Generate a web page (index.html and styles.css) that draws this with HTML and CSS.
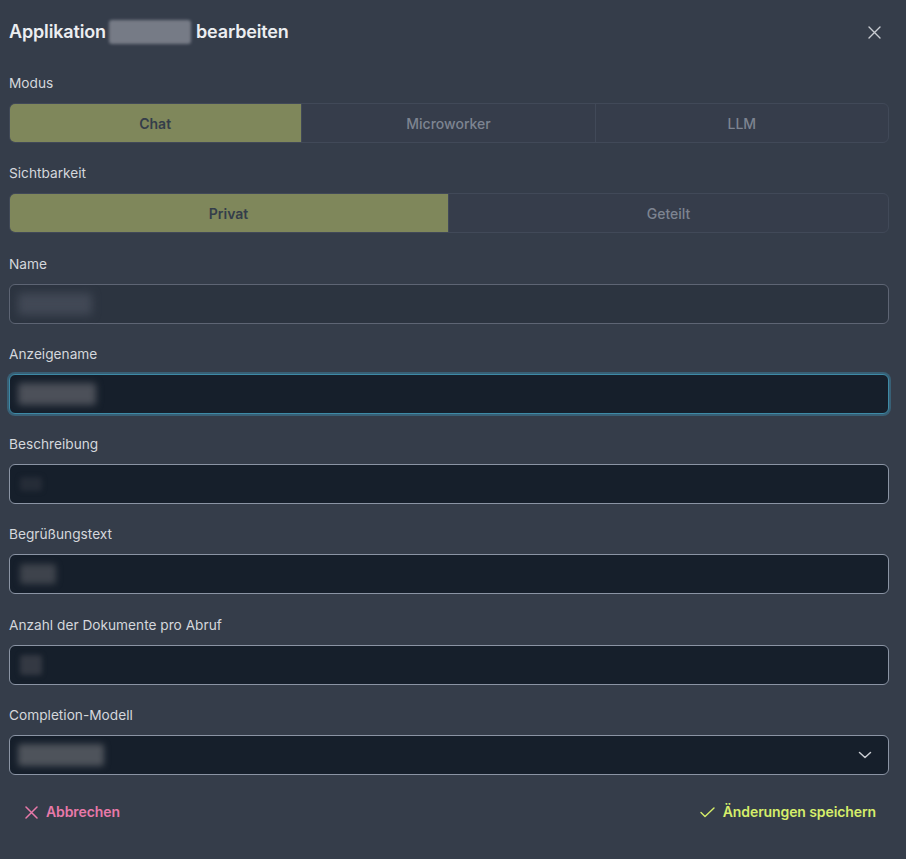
FILE: index.html
```html
<!DOCTYPE html>
<html lang="de">
<head>
<meta charset="utf-8">
<title>Applikation bearbeiten</title>
<link rel="stylesheet" href="styles.css">
</head>
<body>
<div class="dialog">
  <header class="head">
    <h1 class="title"><span>Applikation</span><span class="blur blur-title"></span><span>bearbeiten</span></h1>
    <button class="close" aria-label="Schließen">
      <svg width="13" height="13" viewBox="0 0 13 13"><path d="M1 1 12 12M12 1 1 12" stroke="#c9ccd2" stroke-width="1.4" stroke-linecap="round"/></svg>
    </button>
  </header>

  <div class="field">
    <div class="label">Modus</div>
    <div class="seg">
      <div class="seg-item active">Chat</div>
      <div class="seg-item">Microworker</div>
      <div class="seg-item">LLM</div>
    </div>
  </div>

  <div class="field">
    <div class="label">Sichtbarkeit</div>
    <div class="seg">
      <div class="seg-item active">Privat</div>
      <div class="seg-item">Geteilt</div>
    </div>
  </div>

  <div class="field">
    <div class="label">Name</div>
    <div class="input disabled"><span class="blur blur-name"></span></div>
  </div>

  <div class="field">
    <div class="label">Anzeigename</div>
    <div class="input focus"><span class="blur blur-display"></span></div>
  </div>

  <div class="field">
    <div class="label">Beschreibung</div>
    <div class="input"><span class="blur blur-desc"></span></div>
  </div>

  <div class="field">
    <div class="label">Begrüßungstext</div>
    <div class="input"><span class="blur blur-greet"></span></div>
  </div>

  <div class="field">
    <div class="label">Anzahl der Dokumente pro Abruf</div>
    <div class="input"><span class="blur blur-num"></span></div>
  </div>

  <div class="field">
    <div class="label">Completion-Modell</div>
    <div class="input select"><span class="blur blur-model"></span>
      <svg class="chev" width="14" height="8" viewBox="0 0 14 8"><path d="M1.5 1.5 7 6.5 12.5 1.5" fill="none" stroke="#c9ccd2" stroke-width="1.5" stroke-linecap="round" stroke-linejoin="round"/></svg>
    </div>
  </div>

  <footer class="foot">
    <button class="btn cancel">
      <svg width="13" height="13" viewBox="0 0 13 13"><path d="M1 1 12 12M12 1 1 12" stroke="#e879a9" stroke-width="1.5" stroke-linecap="round"/></svg>
      Abbrechen
    </button>
    <button class="btn save">
      <svg width="15" height="11" viewBox="0 0 15 11"><path d="M1 5.5 5 9.5 14 1" fill="none" stroke="#d6ee6a" stroke-width="1.4" stroke-linecap="round" stroke-linejoin="round"/></svg>
      Änderungen speichern
    </button>
  </footer>
</div>
</body>
</html>
```

FILE: styles.css
```css
html, body {
  margin: 0;
  padding: 0;
  background: #353d4a;
}
body {
  font-family: Inter, "Noto Sans", sans-serif;
  color: #d4d7dc;
  width: 906px;
  height: 859px;
  overflow: hidden;
}
.dialog {
  padding: 18px 17px 0 9px;
  display: flex;
  flex-direction: column;
}
.head {
  display: flex;
  align-items: center;
  justify-content: space-between;
  height: 28px;
  margin-bottom: 27px;
}
.title {
  margin: 0;
  font-size: 18px;
  font-weight: 600;
  color: #eceef1;
  line-height: 28px;
  display: flex;
  align-items: center;
  letter-spacing: -0.15px;
}
.blur {
  display: block;
  filter: blur(3px);
  border-radius: 3px;
}
.blur-title {
  width: 82px;
  height: 24px;
  background: #767b86;
  filter: blur(1.5px);
  margin: 0 5px 0 3px;
}
.close {
  background: none;
  border: 0;
  padding: 0;
  margin-right: 8px;
  width: 13px;
  height: 13px;
  display: flex;
}
.field {
  display: flex;
  flex-direction: column;
  margin-bottom: 20.3px;
}
.label {
  font-size: 13.7px;
  line-height: 20px;
  margin-bottom: 10px;
  color: #d4d7dc;
}
.seg {
  display: flex;
  height: 40px;
  border: 1px solid #414958;
  border-radius: 6px;
  overflow: hidden;
  box-sizing: border-box;
  background: #363d4b;
}
.seg-item {
  flex: 1;
  display: flex;
  align-items: center;
  justify-content: center;
  font-size: 14px;
  font-weight: 500;
  color: #7d8491;
  border-left: 1px solid #414958;
}
.seg-item:first-child {
  border-left: 0;
}
.seg-item.active {
  background: #7f875b;
  color: #343d4a;
  font-weight: 600;
  margin: -1px 0 -1px -1px;
}
.input {
  height: 40px;
  box-sizing: border-box;
  border: 1px solid #8b94a4;
  border-radius: 6px;
  background: #161f2b;
  display: flex;
  align-items: center;
  padding: 0 8px;
}
.input.disabled {
  background: #2c3440;
  border-color: #5e6574;
}
.input.focus {
  border-color: #3e8aa6;
  box-shadow: 0 0 0 2px rgba(60, 130, 160, 0.5);
}
.blur-name { width: 74px; height: 22px; background: #414855; filter: blur(4px); }
.blur-display { width: 78px; height: 22px; background: #4c5059; filter: blur(3.5px); }
.blur-desc { width: 22px; height: 14px; background: #252c37; filter: blur(2.5px); margin-left: 2px; }
.blur-greet { width: 36px; height: 20px; background: #3e434c; filter: blur(3px); margin-left: 2px; }
.blur-num { width: 22px; height: 20px; background: #343943; filter: blur(2.5px); margin-left: 2px; }
.blur-model { width: 86px; height: 22px; background: #4e535b; filter: blur(3px); }
.chev {
  margin-left: auto;
  margin-right: 8px;
}
.foot {
  display: flex;
  justify-content: space-between;
  align-items: center;
  margin-top: -1px;
}
.btn {
  background: none;
  border: 0;
  font-family: Inter, "Noto Sans", sans-serif;
  font-size: 14px;
  font-weight: 600;
  display: flex;
  align-items: center;
  gap: 8px;
  padding: 8px 13px 8px 16px;
  line-height: 20px;
  letter-spacing: -0.1px;
}
.cancel { color: #e879a9; }
.save { color: #d6ee6a; }
```
